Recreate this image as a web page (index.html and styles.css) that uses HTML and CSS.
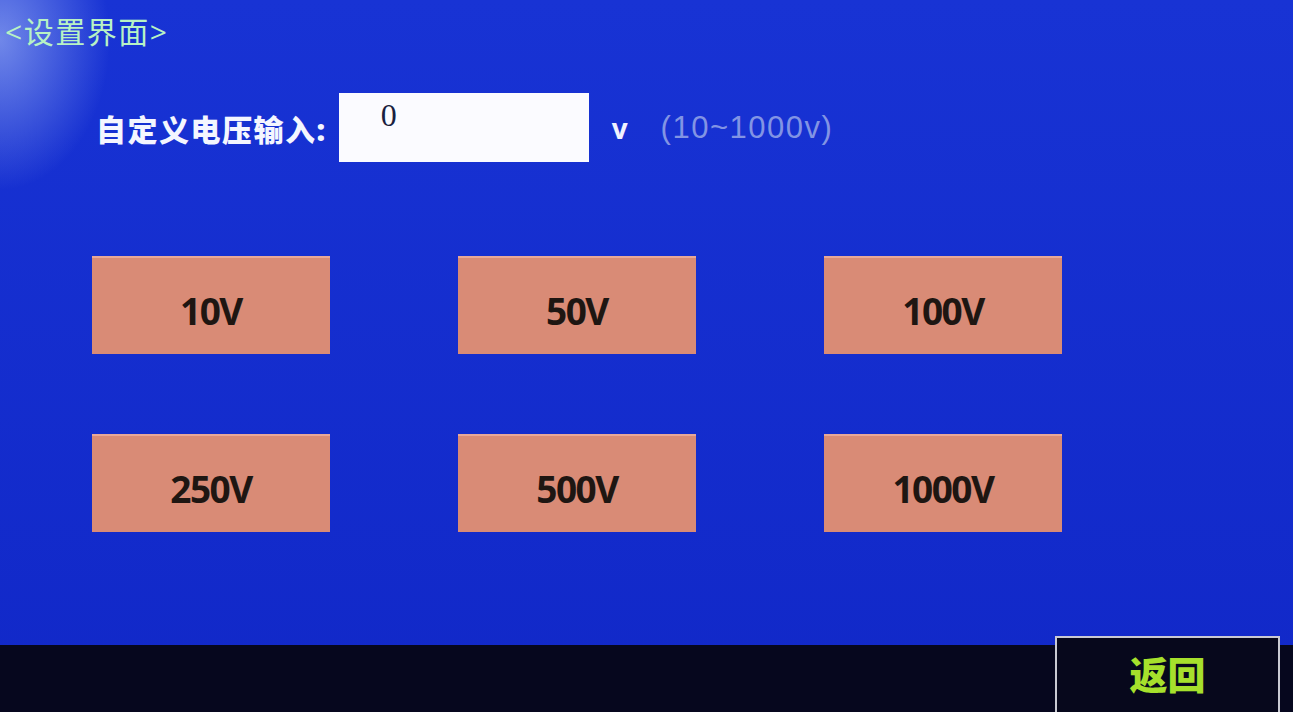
FILE: index.html
```html
<!DOCTYPE html>
<html lang="zh-CN">
<head>
    <meta charset="UTF-8">
    <title>设置界面</title>
    <link rel="stylesheet" href="styles.css">
</head>
<body>
    <div class="screen">
        <div class="title">&lt;设置界面&gt;</div>

        <!-- custom voltage -->
        <div class="input-row">
            <span class="label">自定义电压输入:</span>
            <div class="value-box">0</div>
            <span class="unit">v</span>
            <span class="range">(10~1000v)</span>
        </div>

        <div class="presets">
            <div class="preset">10V</div>
            <div class="preset">50V</div>
            <div class="preset">100V</div>
            <div class="preset">250V</div>
            <div class="preset">500V</div>
            <div class="preset">1000V</div>
        </div>

        <div class="footer">
            <div class="back">返回</div>
        </div>
    </div>
</body>
</html>
```

FILE: styles.css
```css
body {
    margin: 0;
    width: 1293px;
    height: 712px;
    overflow: hidden;
    font-family: "Open Sans", "Noto Sans CJK SC", sans-serif;
    background-color: #1630d0;
}
.screen {
    height: 712px;
    display: flex;
    flex-direction: column;
    background:
        radial-gradient(ellipse 110px 150px at 0 40px, rgba(200,220,255,0.5), rgba(200,220,255,0) 100%),
        linear-gradient(to bottom, #1833d4, #1128c8);
}
.title {
    padding: 12px 0 0 5px;
    height: 39px;
    font-size: 30px;
    line-height: 39px;
    color: #b8f2c4;
    letter-spacing: 1.5px;
}
.input-row {
    display: flex;
    align-items: center;
    margin-top: 42px;
    padding-left: 96px;
    height: 69px;
}
.label {
    font-size: 30px;
    font-weight: 900;
    color: #f4f6ff;
    margin-right: 12px;
    letter-spacing: 1.5px;
}
.value-box {
    width: 208px;
    height: 63px;
    padding: 6px 0 0 42px;
    background-color: #fbfbff;
    font-family: "Liberation Serif", serif;
    font-size: 32px;
    line-height: 32px;
    color: #1a1f40;
}
.unit {
    margin-left: 23px;
    font-size: 28px;
    font-weight: bold;
    color: #f0f2ff;
}
.range {
    margin-left: 33px;
    font-family: "Liberation Sans", sans-serif;
    font-size: 31px;
    letter-spacing: 1.5px;
    color: #8294e4;
}
.presets {
    display: grid;
    grid-template-columns: repeat(3, 238px);
    grid-auto-rows: 98px;
    column-gap: 128px;
    row-gap: 80px;
    margin-top: 94px;
    padding-left: 92px;
}
.preset {
    display: flex;
    align-items: center;
    justify-content: center;
    padding-top: 8px;
    box-sizing: border-box;
    background-color: #d98b76;
    border-top: 2px solid #e8a898;
    font-size: 37px;
    font-weight: bold;
    color: #1e1612;
    letter-spacing: -1.5px;
}
.footer {
    margin-top: auto;
    height: 76px;
    display: flex;
    justify-content: flex-end;
    padding-right: 13px;
    background: linear-gradient(to bottom, rgba(0,0,0,0) 0 9px, #06071e 9px);
}
.back {
    width: 221px;
    border: 2px solid #c9cad2;
    border-bottom: none;
    background-color: #07081c;
    display: flex;
    align-items: center;
    justify-content: center;
    padding-bottom: 6px;
    font-size: 38px;
    font-weight: 900;
    color: #a6e02c;
}
```
